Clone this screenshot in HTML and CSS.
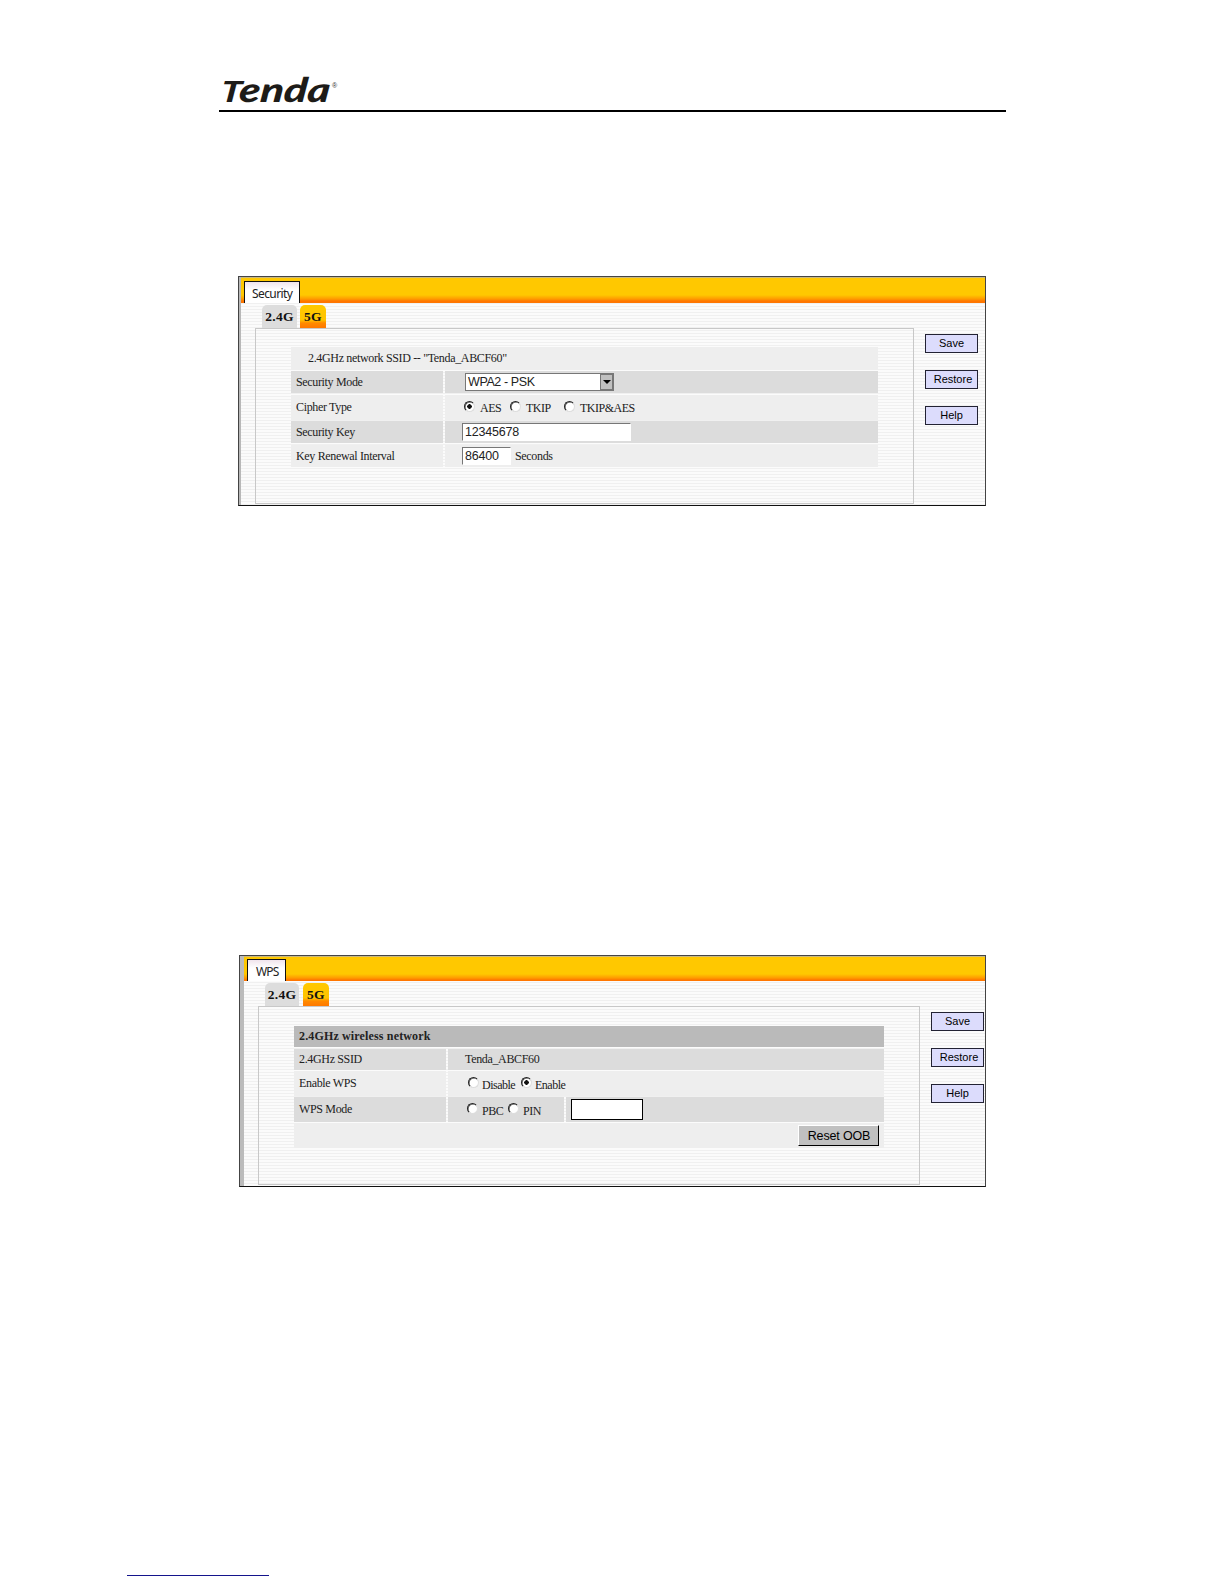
FILE: index.html
```html
<!DOCTYPE html>
<html lang="en">
<head>
    <meta charset="UTF-8">
    <title>Tenda</title>
    <link rel="stylesheet" href="styles.css">
</head>
<body>

    <header>
        <svg class="logo" width="120" height="30" viewBox="0 0 120 30">
            <g transform="skewX(-6)">
                <text class="logo-text" x="4" y="27" textLength="109" lengthAdjust="spacingAndGlyphs"><tspan class="logo-cap">T</tspan><tspan dx="-2">enda</tspan></text>
            </g>
            <text class="logo-mark" x="113" y="13">®</text>
        </svg>
    </header>

    <!-- Security -->
    <section class="panel security">
        <div class="top-bar"><span class="page-tab">Security</span></div>
        <div class="content">
            <div class="main">
                <div class="band-tabs">
                    <a class="band">2.4G</a>
                    <a class="band active">5G</a>
                </div>
                <div class="box">
                    <div class="row ssid light"><div class="cell">2.4GHz network SSID -- "Tenda_ABCF60"</div></div>
                    <div class="row short dark">
                        <div class="cell">Security Mode</div>
                        <div class="cell value mode">
                            <div class="select">
                                <span>WPA2 - PSK</span>
                                <i class="arrow"><svg width="8" height="4"><path d="M0 0h8L4 4z"/></svg></i>
                            </div>
                        </div>
                    </div>
                    <div class="row tall light">
                        <div class="cell">Cipher Type</div>
                        <div class="cell value radios">
                            <label class="aes"><input type="radio" name="cipher" checked>AES</label>
                            <label class="tkip"><input type="radio" name="cipher">TKIP</label>
                            <label><input type="radio" name="cipher">TKIP&amp;AES</label>
                        </div>
                    </div>
                    <div class="row short dark">
                        <div class="cell">Security Key</div>
                        <div class="cell value"><input class="text key" type="text" value="12345678"></div>
                    </div>
                    <div class="row short light">
                        <div class="cell">Key Renewal Interval</div>
                        <div class="cell value"><input class="text interval" type="text" value="86400">Seconds</div>
                    </div>
                </div>
            </div>
            <div class="side">
                <button>Save</button>
                <button class="restore">Restore</button>
                <button>Help</button>
            </div>
        </div>
    </section>

    <!-- WPS -->
    <section class="panel wps">
        <div class="top-bar"><span class="page-tab">WPS</span></div>
        <div class="content">
            <div class="main">
                <div class="band-tabs">
                    <a class="band">2.4G</a>
                    <a class="band active">5G</a>
                </div>
                <div class="box">
                    <div class="row title"><div class="cell">2.4GHz wireless network</div></div>
                    <div class="row name dark">
                        <div class="cell">2.4GHz SSID</div>
                        <div class="cell value">Tenda_ABCF60</div>
                    </div>
                    <div class="row tall light">
                        <div class="cell">Enable WPS</div>
                        <div class="cell value radios enable">
                            <label class="disable"><input type="radio" name="wps">Disable</label>
                            <label><input type="radio" name="wps" checked>Enable</label>
                        </div>
                    </div>
                    <div class="row tall dark pin-row">
                        <div class="cell">WPS Mode</div>
                        <div class="cell value radios method">
                            <label class="pbc"><input type="radio" name="mode">PBC</label>
                            <label><input type="radio" name="mode">PIN</label>
                        </div>
                        <div class="cell pin-cell"><input class="pin" type="text"></div>
                    </div>
                    <div class="row tall light reset-row"><div class="cell"><button class="reset">Reset OOB</button></div></div>
                </div>
            </div>
            <div class="side">
                <button>Save</button>
                <button class="restore">Restore</button>
                <button>Help</button>
            </div>
        </div>
    </section>

    <footer><a class="footer-link"></a></footer>

</body>
</html>
```

FILE: styles.css
```css
* {
    box-sizing: border-box;
}
body {
    margin: 0;
    height: 1584px;
    overflow: hidden;
    display: flex;
    flex-direction: column;
    background-color: #ffffff;
    color: #222222;
    font-family: "Liberation Serif", "Times New Roman", serif;
    font-size: 12px;
    letter-spacing: -0.34px;
}
header {
    width: 787px;
    height: 112px;
    margin-left: 219px;
    padding-top: 75px;
    border-bottom: 2px solid #000000;
}
.logo {
    display: block;
    overflow: visible;
    letter-spacing: 0;
}
.logo-text {
    font: italic 900 34px Lato, sans-serif;
    fill: #1d1b18;
}
.logo-cap {
    font-size: 29px;
}
.logo-mark {
    font: 7px "Liberation Sans", sans-serif;
    fill: #333333;
}

/* Panels */
.panel {
    display: flex;
    flex-direction: column;
    border: 1px solid #444444;
    border-bottom-color: #111111;
    background: repeating-linear-gradient(#fbfbfb 0, #fbfbfb 2px, #f0f0f0 2px, #f0f0f0 3px);
}
.security {
    width: 748px;
    height: 230px;
    margin: 164px 0 0 238px;
    box-shadow: inset 2px 0 #b8b8b8;
    padding-left: 2px;
}
.wps {
    width: 747px;
    height: 232px;
    margin: 449px 0 0 239px;
    box-shadow: inset 4px 0 #bbbbbb;
    padding-left: 4px;
}
.top-bar {
    height: 26px;
    padding: 3px 0 0 3px;
    border-top: 1px solid #c9b880;
    background: linear-gradient(#ffc800 0, #ffc800 17px, #ff9a00 21px, #ff7600 23px, #ff7600 25px);
}
.wps .top-bar {
    height: 25px;
    padding-top: 2px;
}
.page-tab {
    display: block;
    width: 56px;
    height: 22px;
    padding-left: 7px;
    border: solid #111111;
    border-width: 1px 1px 0;
    background: linear-gradient(#f0e4ec, #ffffff 8px);
    font: 12px/23px "Noto Sans", sans-serif;
    letter-spacing: -0.6px;
}
.wps .page-tab {
    width: 39px;
    line-height: 24px;
    letter-spacing: -0.8px;
    padding-left: 8px;
}
.content {
    display: flex;
    flex: 1;
}
.main {
    width: 659px;
    margin-left: 14px;
    display: flex;
    flex-direction: column;
}
.wps .main {
    width: 662px;
}
.band-tabs {
    display: flex;
    gap: 3px;
    padding: 2px 0 0 7px;
    height: 25px;
}
.wps .band-tabs {
    gap: 4px;
}
.band {
    width: 35px;
    height: 23px;
    border-radius: 5px 5px 0 0;
    background-color: #dddddd;
    color: #111111;
    font-size: 13.5px;
    font-weight: bold;
    line-height: 24px;
    letter-spacing: 0.3px;
    text-align: center;
}
.wps .band {
    width: 34px;
}
.band.active,
.wps .band.active {
    width: 26px;
    background: linear-gradient(#ffc800 0, #ffc400 15px, #ff8a00 18px, #ff7800 23px);
}
.box {
    flex: 1;
    margin-bottom: 1px;
    padding: 18px 35px 0;
    border: 1px solid #c8c8c8;
}
.wps .box {
    padding-top: 19px;
}

/* Rows */
.row {
    display: grid;
    grid-template-columns: 152px 1fr;
    column-gap: 2px;
    margin-bottom: 1px;
}
.security .box > .row:nth-child(even) {
    margin-bottom: 2px;
}
.cell {
    display: flex;
    align-items: center;
    padding-left: 5px;
    white-space: nowrap;
}
.dark .cell {
    background-color: #dcdcdc;
}
.light .cell {
    background-color: #eeeeee;
}
.short {
    height: 22px;
}
.tall {
    height: 25px;
}
.ssid,
.title,
.reset-row {
    grid-template-columns: 1fr;
}
.ssid {
    height: 23px;
}
.ssid .cell {
    padding-left: 17px;
}
.title {
    height: 21px;
    margin-bottom: 2px;
    font-weight: bold;
    letter-spacing: 0.15px;
}
.title .cell {
    background-color: #bababa;
}
.name {
    height: 21px;
}
.value {
    padding-left: 17px;
}
.mode {
    padding-left: 20px;
}

/* Controls */
.select {
    display: flex;
    width: 149px;
    height: 18px;
    border: 1px solid #777777;
    background-color: #ffffff;
    font: 12.5px/17px "Liberation Sans", Arial, sans-serif;
    letter-spacing: -0.4px;
}
.select span {
    flex: 1;
    padding-left: 2px;
}
.arrow {
    display: flex;
    align-items: center;
    justify-content: center;
    width: 13px;
    border: 1px solid #777777;
    background-color: #c0c0c0;
}
.text {
    height: 18px;
    padding: 0 0 0 2px;
    border: 1px solid #ffffff;
    border-top-color: #777777;
    border-left-color: #777777;
    background-color: #ffffff;
    color: #222222;
    font: 12.5px "Liberation Sans", Arial, sans-serif;
    letter-spacing: -0.2px;
}
.key {
    width: 169px;
}
.interval {
    width: 49px;
    margin-right: 4px;
}
.radios {
    padding-left: 19px;
    letter-spacing: -0.5px;
}
.radios label {
    display: flex;
    align-items: center;
    padding-top: 1px;
}
.aes {
    width: 46px;
}
.tkip {
    width: 54px;
}
.wps .radios label {
    padding-top: 3px;
}
.radios input {
    appearance: none;
    width: 11px;
    height: 11px;
    margin: -4px 5px 0 0;
    border: 1px solid #dddddd;
    border-top-color: #222222;
    border-left-color: #222222;
    border-radius: 50%;
    background-color: #ffffff;
    box-shadow: inset 0.5px 0.5px #333333;
}
.radios input:checked {
    background-image: radial-gradient(circle, #111111 2px, transparent 2.5px);
}
.wps .radios input {
    margin: -6px 3px 0 0;
}
.wps .value {
    padding-left: 17px;
}
.wps .enable {
    padding-left: 20px;
}
.disable {
    width: 53px;
}
.wps .method {
    padding-left: 19px;
}
.wps .method input {
    margin-right: 4px;
}
.pbc {
    width: 41px;
}
.pin-row {
    grid-template-columns: 152px 116px 1fr;
}
.pin {
    width: 72px;
    height: 21px;
    border: 1px solid #000000;
    background-color: #ffffff;
}
.reset-row .cell {
    justify-content: flex-end;
    padding-right: 5px;
}
.reset {
    width: 81px;
    height: 21px;
    padding: 0 0 0 1px;
    border: 1px solid #000000;
    border-top-color: #ffffff;
    border-left-color: #ffffff;
    background-color: #c0c0c0;
    font: 12.5px "Liberation Sans", Arial, sans-serif;
    letter-spacing: -0.15px;
}

/* Save / Restore / Help */
.side {
    display: flex;
    flex-direction: column;
    gap: 17px;
    padding: 31px 0 0 11px;
}
.side button {
    width: 53px;
    height: 19px;
    padding: 0 0 2px;
    border: 1px solid #222233;
    background-color: #dcdcfc;
    font: 11px "Liberation Sans", Arial, sans-serif;
    letter-spacing: 0;
}
.side .restore {
    padding-left: 3px;
}
footer {
    margin: 388px 0 0 127px;
}
.footer-link {
    display: block;
    width: 142px;
    border-bottom: 1px solid #14148c;
}
```
